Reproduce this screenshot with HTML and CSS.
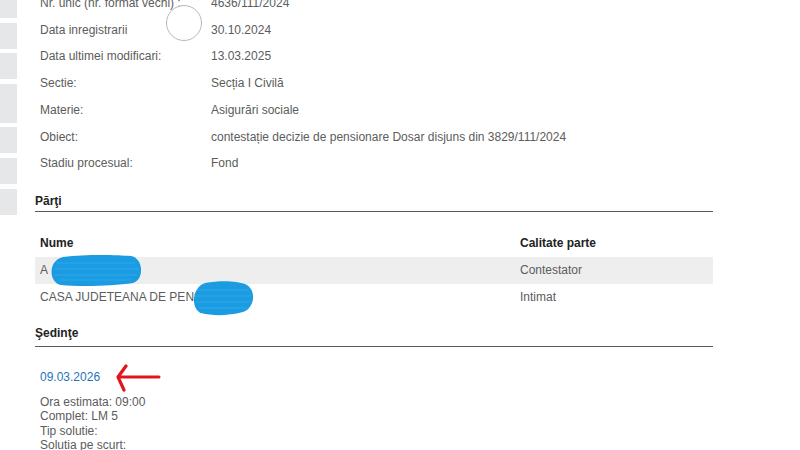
FILE: index.html
```html
<!DOCTYPE html>
<html lang="ro">
<head>
    <meta charset="UTF-8">
    <meta name="viewport" content="width=device-width, initial-scale=1.0">
    <title>Detalii dosar</title>
    <link rel="stylesheet" href="styles.css">
</head>
<body>
    <div class="page">
        <!-- Left menu tiles -->
        <div class="sidebar">
            <div class="tile"></div>
            <div class="tile"></div>
            <div class="tile"></div>
            <div class="tile tall"></div>
            <div class="tile"></div>
            <div class="tile"></div>
            <div class="tile"></div>
        </div>

        <div class="main">
            <div class="info">
                <div class="info-row">
                    <div class="info-label">Nr. unic (nr. format vechi) :
                        <span class="click-ring"></span>
                    </div>
                    <div class="info-value">4636/111/2024</div>
                </div>
                <div class="info-row">
                    <div class="info-label">Data inregistrarii</div>
                    <div class="info-value">30.10.2024</div>
                </div>
                <div class="info-row">
                    <div class="info-label">Data ultimei modificari:</div>
                    <div class="info-value">13.03.2025</div>
                </div>
                <div class="info-row">
                    <div class="info-label">Sectie:</div>
                    <div class="info-value">Secția I Civilă</div>
                </div>
                <div class="info-row">
                    <div class="info-label">Materie:</div>
                    <div class="info-value">Asigurări sociale</div>
                </div>
                <div class="info-row">
                    <div class="info-label">Obiect:</div>
                    <div class="info-value">contestație decizie de pensionare Dosar disjuns din 3829/111/2024</div>
                </div>
                <div class="info-row">
                    <div class="info-label">Stadiu procesual:</div>
                    <div class="info-value">Fond</div>
                </div>
            </div>

            <h2 class="section-title parti-title">Părţi</h2>

            <table class="parti">
                <thead>
                    <tr>
                        <th class="col-name">Nume</th>
                        <th>Calitate parte</th>
                    </tr>
                </thead>
                <tbody>
                    <tr class="odd">
                        <td class="col-name">A
                            <svg class="scribble scribble-one" viewBox="0 0 98 34">
                                <path d="M16 4 C40 1 70 2 84 3 C96 5 98 26 86 30 C66 33 34 34 14 32 C2 30 0 8 16 4 Z" fill="#1b9be2"/>
                                <path d="M10 10 H88 M8 16 H92 M8 22 H90 M12 27 H84" stroke="#3fb0ee" stroke-width="1" opacity="0.6"/>
                            </svg>
                        </td>
                        <td>Contestator</td>
                    </tr>
                    <tr>
                        <td class="col-name">CASA JUDETEANA DE PENSII
                            <svg class="scribble scribble-two" viewBox="0 0 64 36">
                                <path d="M14 3 C30 0 46 1 54 4 C66 9 64 28 52 32 C36 36 22 36 10 33 C0 29 0 8 14 3 Z" fill="#1b9be2"/>
                                <path d="M6 10 H58 M4 16 H60 M4 22 H60 M8 28 H56" stroke="#3fb0ee" stroke-width="1" opacity="0.6"/>
                            </svg>
                        </td>
                        <td>Intimat</td>
                    </tr>
                </tbody>
            </table>

            <h2 class="section-title sedinte-title">Şedinţe</h2>

            <div class="sedinta">
                <div class="sedinta-date">
                    <a href="#">09.03.2026</a>
                    <svg class="arrow" viewBox="0 0 46 28" width="46" height="28">
                        <path d="M4 13 H44" stroke="#e3151c" stroke-width="3" stroke-linecap="round" fill="none"/>
                        <path d="M11 2 L3 13 L9 26" stroke="#e3151c" stroke-width="3.2" stroke-linecap="round" stroke-linejoin="round" fill="none"/>
                    </svg>
                </div>
                <div class="sedinta-details">
                    <div>Ora estimata: 09:00</div>
                    <div>Complet: LM 5</div>
                    <div>Tip solutie:</div>
                    <div>Solutia pe scurt:</div>
                </div>
            </div>
        </div>
    </div>
</body>
</html>
```

FILE: styles.css
```css
body {
    margin: 0;
    font-family: "Liberation Sans", Arial, sans-serif;
    font-size: 12px;
    color: #5c5c5c;
    background-color: #fff;
    overflow: hidden;
}
.page {
    display: flex;
    margin-top: -10px;
}

/* Left menu */
.sidebar {
    width: 17px;
    padding-top: 2px;
    display: flex;
    flex-direction: column;
    gap: 4.6px;
}
.tile {
    height: 26px;
    background-color: #e5e7e9;
}
.tile.tall {
    height: 39px;
}

.main {
    margin-left: 18px;
    width: 678px;
}

/* Case info */
.info-row {
    display: flex;
    line-height: 26.7px;
}
.info-label {
    position: relative;
    width: 171px;
    padding-left: 5px;
    flex-shrink: 0;
}
.info-value {
    flex: 1;
}
.click-ring {
    position: absolute;
    left: 131px;
    top: 15px;
    width: 34px;
    height: 34px;
    border: 1.5px solid #b8b8b8;
    border-radius: 50%;
}

/* Section headings */
.section-title {
    margin: 0;
    font-size: 12px;
    font-weight: bold;
    color: #222;
    line-height: 16px;
    padding-bottom: 2px;
    border-bottom: 1px solid #5a5a5a;
}
.parti-title {
    margin-top: 16px;
}
.sedinte-title {
    margin-top: 14px;
    padding-bottom: 5px;
}

/* Parties table */
.parti {
    width: 100%;
    border-collapse: collapse;
    margin-top: 18px;
}
.parti th {
    text-align: left;
    color: #222;
    font-weight: bold;
    height: 27px;
    padding: 0 5px;
}
.parti td {
    height: 27px;
    padding: 0 5px;
}
.parti .col-name {
    position: relative;
    width: 470px;
}
.parti tr.odd td {
    background-color: #eeeeee;
}
.scribble {
    position: absolute;
    pointer-events: none;
}
.scribble-one {
    left: 12px;
    top: -4px;
    width: 98px;
    height: 34px;
}
.scribble-two {
    left: 156px;
    top: -4px;
    width: 64px;
    height: 36px;
}

/* Hearings */
.sedinta {
    padding: 18px 5px 0;
}
.sedinta-date {
    display: flex;
    align-items: center;
    height: 24px;
}
.sedinta-date a {
    color: #1f74b8;
    text-decoration: none;
}
.arrow {
    margin-left: 15px;
    margin-top: 2px;
}
.sedinta-details {
    margin-top: 6px;
    line-height: 14.4px;
}
```
